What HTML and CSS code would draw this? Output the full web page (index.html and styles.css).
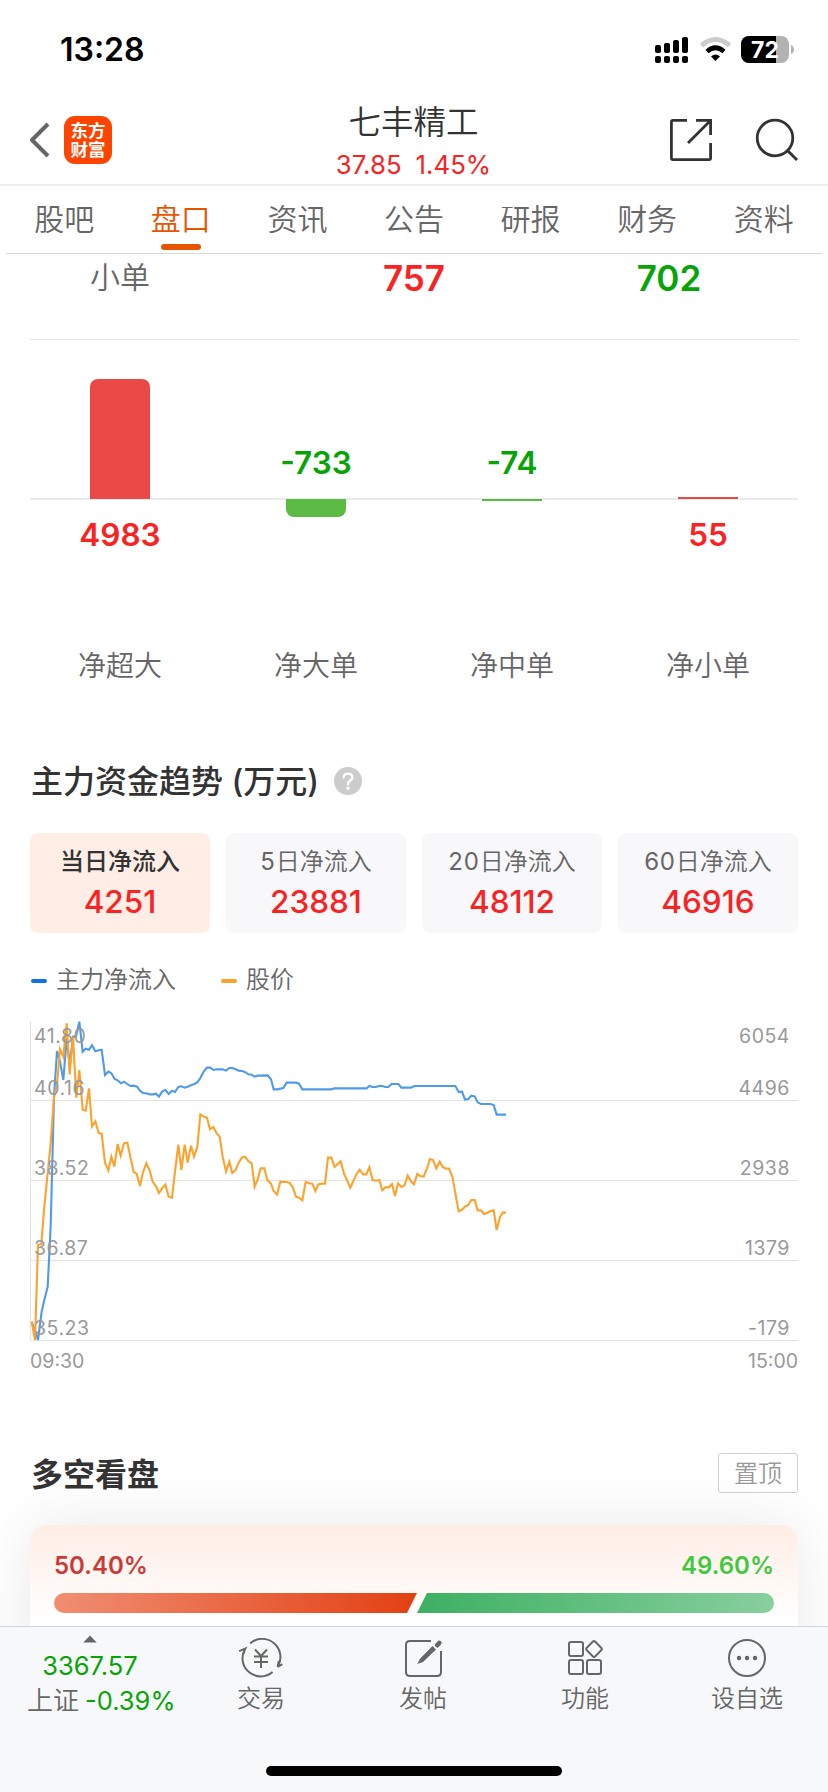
FILE: index.html
```html
<!DOCTYPE html>
<html lang="zh-CN">
<head>
<meta charset="utf-8">
<title>七丰精工</title>
<link rel="stylesheet" href="styles.css">
</head>
<body>
<div class="screen">
  <div class="status">
    <span class="clock">13:28</span>
    <svg class="status-icons" width="140" height="28" viewBox="655 36 140 28">
      <g fill="#000">
        <rect x="655" y="45" width="6" height="8" rx="2"/><rect x="664" y="43" width="6" height="10" rx="2"/><rect x="673" y="40" width="6" height="13" rx="2"/><rect x="682" y="37" width="6" height="16" rx="2"/>
        <rect x="655" y="56" width="6" height="7" rx="2"/><rect x="664" y="56" width="6" height="7" rx="2"/><rect x="673" y="56" width="6" height="7" rx="2"/><rect x="682" y="56" width="6" height="7" rx="2"/>
      </g>
      <path d="M701.500 45.500Q715.500 33.500 729.500 45.500" fill="none" stroke="#ccc" stroke-width="5"/>
      <path d="M707 51.500Q715.500 44 724 51.500" fill="none" stroke="#000" stroke-width="4.600"/>
      <path d="M711 56.500Q715.500 52.500 720 56.500L715.500 61Z"/>
      <clipPath id="bat"><rect x="741" y="36" width="48" height="27" rx="8"/></clipPath>
      <g clip-path="url(#bat)"><rect x="741" y="36" width="48" height="27" fill="#b2b2b2"/><rect x="741" y="36" width="35" height="27"/></g>
      <path d="M791 45Q794 46.500 794 49.500T791 54Z" fill="#b2b2b2"/>
      <text class="bat-text" x="765" y="58">72</text>
    </svg>
  </div>

  <header class="header">
    <div class="header-left">
      <svg width="22" height="38" viewBox="0 0 22 38"><path d="M19 3L3 19L19 35" fill="none" stroke="#666" stroke-width="4" stroke-linejoin="round"/></svg>
      <div class="logo"><span>东方</span><span>财富</span></div>
    </div>
    <div class="header-title">
      <div class="stock-name">七丰精工</div>
      <div class="stock-price"><span>37.85</span><span>1.45%</span></div>
    </div>
    <svg class="header-icons" width="130" height="46" viewBox="668 117 130 46" fill="none" stroke="#333" stroke-width="2.800">
      <path d="M687 120.400H673Q671.400 120.400 671.400 122V158Q671.400 159.600 673 159.600H709Q710.600 159.600 710.600 158V143M696 120.400H710.600V135M710 121L688 143"/>
      <circle cx="775" cy="138" r="17.800"/><path d="M788 151L797 160"/>
    </svg>
  </header>

  <nav class="tabs">
    <span>股吧</span><span class="active">盘口</span><span>资讯</span><span>公告</span><span>研报</span><span>财务</span><span>资料</span>
  </nav>

  <main class="content">
    <div class="order-row">
      <span>小单</span><b class="up">757</b><b class="down">702</b>
    </div>

    <div class="flow-chart">
      <div class="col"><div class="above"><i class="bar bar-up h120"></i></div><div class="below"><b class="up">4983</b></div><span>净超大</span></div>
      <div class="col"><div class="above"><b class="down">-733</b></div><div class="below"><i class="bar bar-down h18"></i></div><span>净大单</span></div>
      <div class="col"><div class="above"><b class="down">-74</b></div><div class="below"><i class="bar bar-down thin"></i></div><span>净中单</span></div>
      <div class="col"><div class="above"><i class="bar bar-up thin"></i></div><div class="below"><b class="up">55</b></div><span>净小单</span></div>
    </div>

    <h2 class="section-title"><span>主力资金趋势 (万元)</span>
      <svg width="28" height="28" viewBox="0 0 28 28"><circle cx="14" cy="14" r="14" fill="#ccc"/><path d="M9.700 10.300Q9.900 6.600 14 6.600T18.300 10.400Q18.300 12.400 16 13.800Q14 15 14 17.300" fill="none" stroke="#fff" stroke-width="2.400" stroke-linecap="round"/><circle cx="14" cy="21.300" r="1.700" fill="#fff"/></svg>
    </h2>

    <div class="cards">
      <div class="card selected"><span>当日净流入</span><strong>4251</strong></div>
      <div class="card"><span><em>5</em>日净流入</span><strong>23881</strong></div>
      <div class="card"><span><em>20</em>日净流入</span><strong>48112</strong></div>
      <div class="card"><span><em>60</em>日净流入</span><strong>46916</strong></div>
    </div>

    <div class="legend">
      <i class="dash blue"></i><span>主力净流入</span>
      <i class="dash orange"></i><span>股价</span>
    </div>

    <svg class="trend" width="768" height="322" viewBox="30 30 2304 966">
      <g class="grid"><path d="M31.500 33V993M30 271.500H2334M30 511.500H2334M30 751.500H2334M30 991.500H2334"/></g>
      <polyline class="line-blue" points="35,935 45,965 54,990 65,905 73,870 83,830 92,650 102,260 111,123 120,155 130,210 140,85 149,165 159,80 168,80 178,35 188,125 197,116 207,119 216,106 226,124 236,121 245,119 255,195 265,185 274,190 284,207 293,211 303,220 312,215 322,222 331,228 341,227 351,230 360,242 369,249 379,250 389,253 399,253 408,251 417,260 427,244 436,240 446,252 456,242 465,246 475,231 484,229 494,233 503,230 513,226 523,222 532,217 541,204 551,185 561,173 571,173 580,180 590,178 608,178 618,182 628,174 637,174 647,178 656,182 666,183 675,186 685,193 695,194 704,200 713,197 743,196 753,208 761,238 771,238 790,234 800,218 828,218 837,221 847,238 933,238 943,235 1040,235 1048,228 1058,231 1067,231 1077,228 1087,228 1096,231 1105,231 1115,222 1135,222 1144,233 1173,233 1183,228 1306,228 1316,246 1326,245 1335,269 1345,267 1354,257 1364,259 1373,277 1383,282 1411,282 1421,285 1430,314 1458,314"/>
      <polyline class="line-orange" points="35,935 45,990 54,705 64,702 73,590 83,490 92,400 102,262 111,225 120,118 130,140 140,40 149,193 159,80 169,263 178,180 188,299 197,302 207,235 216,349 226,334 236,369 245,371 255,458 265,481 274,440 283,470 293,402 302,437 312,400 322,398 331,440 341,486 350,491 360,528 369,487 379,460 389,482 398,515 408,529 417,549 427,534 436,524 446,560 456,563 465,485 475,404 484,480 494,404 503,458 513,407 522,440 532,410 541,313 551,320 561,323 570,358 580,351 590,370 599,380 608,440 618,485 628,455 637,489 647,480 656,458 666,442 675,440 685,453 695,460 704,530 713,508 722,475 733,475 742,510 753,521 761,543 771,554 781,515 800,516 809,519 818,531 828,560 837,563 847,571 857,516 867,520 877,521 886,543 895,523 904,521 915,521 924,443 934,443 944,471 962,454 972,491 982,513 991,533 1001,511 1010,491 1019,479 1029,493 1039,493 1048,472 1058,510 1068,512 1078,510 1087,541 1096,532 1106,532 1116,522 1125,558 1134,520 1144,531 1154,526 1163,497 1173,514 1182,523 1192,492 1201,498 1211,500 1221,475 1230,447 1239,450 1249,475 1259,455 1268,471 1278,476 1287,476 1297,500 1307,555 1316,604 1325,600 1335,590 1345,585 1354,570 1364,570 1373,601 1383,601 1392,612 1402,609 1412,603 1421,601 1430,660 1440,621 1449,607 1458,608"/>
      <g class="axis">
        <text x="42" y="99">41.80</text><text x="42" y="255">40.16</text><text x="42" y="495">38.52</text><text x="42" y="735">36.87</text><text x="42" y="975">35.23</text>
      </g>
      <g class="axis right">
        <text x="2310" y="99">6054</text><text x="2310" y="255">4496</text><text x="2310" y="495">2938</text><text x="2310" y="735">1379</text><text x="2310" y="975">-179</text>
      </g>
    </svg>
    <div class="times"><span>09:30</span><span>15:00</span></div>

    <div class="section-head">
      <h2>多空看盘</h2>
      <span class="pin">置顶</span>
    </div>

    <div class="ratio-card">
      <div class="ratio-labels"><span class="bull">50.40%</span><span class="bear">49.60%</span></div>
      <div class="ratio-bar"><i class="bull-bar"></i><i class="bear-bar"></i></div>
    </div>
  </main>

  <footer class="bottom">
    <div class="bottom-items">
      <div class="index">
        <svg width="14" height="8" viewBox="0 0 14 8"><path d="M7 0.500L13.700 7.500H0.300Z" fill="#666"/></svg>
        <div class="index-value">3367.57</div>
        <div class="index-change"><span>上证</span><span class="green">-0.39%</span></div>
      </div>
      <div class="item">
        <svg width="48" height="40" viewBox="237 1638 48 40">
          <path d="M250.200 1643.400A18.200 18.200 0 0 1 277.600 1666.800L282.300 1664.200M277.600 1666.800L278.800 1661"/>
          <path d="M272.600 1672A18.200 18.200 0 0 1 245.200 1648.700L239.200 1651.200M245.200 1648.700L243.500 1654"/>
          <path d="M255 1649.500L261 1656L267 1649.500M261 1656V1668M254 1656.500H268M254 1662H268"/>
        </svg>
        <span>交易</span>
      </div>
      <div class="item">
        <svg width="44" height="40" viewBox="401 1638 44 40">
          <path d="M431 1641H410Q406 1641 406 1645V1672Q406 1676 410 1676H437Q441 1676 441 1672V1651"/>
          <path d="M417.200 1664L420.200 1658.500L432.500 1646L436 1649.500L423 1662Z" fill="#666" stroke="none"/><path d="M437.200 1645.200L439.300 1643" stroke-width="4.600" stroke-linecap="round"/>
        </svg>
        <span>发帖</span>
      </div>
      <div class="item">
        <svg width="44" height="40" viewBox="563 1638 44 40">
          <rect x="569" y="1642" width="14" height="14" rx="2"/><rect x="569" y="1660" width="14" height="14" rx="2"/><rect x="587" y="1660" width="14" height="14" rx="2"/>
          <rect x="588" y="1643" width="12" height="12" rx="1.500" transform="rotate(45 594 1649)"/>
        </svg>
        <span>功能</span>
      </div>
      <div class="item">
        <svg width="44" height="40" viewBox="725 1638 44 40">
          <circle cx="747" cy="1658" r="18"/><g class="dots"><circle cx="739" cy="1658" r="2.200"/><circle cx="747" cy="1658" r="2.200"/><circle cx="755" cy="1658" r="2.200"/></g>
        </svg>
        <span>设自选</span>
      </div>
    </div>
    <div class="home-bar"></div>
  </footer>
</div>
</body>
</html>
```
FILE: styles.css
```css
* { box-sizing: border-box; }
body { margin: 0; background: #fff; }
i, em { font-style: normal; }
h2 { margin: 0; }
svg { display: block; flex: none; }

.screen {
  width: 828px;
  height: 1792px;
  display: flex;
  flex-direction: column;
  overflow: hidden;
  font-family: Inter, "Noto Sans CJK SC", sans-serif;
  color: #666;
  white-space: nowrap;
}

.status {
  height: 99px;
  padding: 0 33px 0 60px;
  display: flex;
  justify-content: space-between;
  align-items: center;
}
.clock { font-size: 32px; font-weight: 600; color: #000; }
.bat-text { font-size: 23px; font-weight: 700; fill: #fff; text-anchor: middle; }

.header {
  height: 87px;
  border-bottom: 2px solid #eee;
  padding: 0 30px 0 29px;
  display: grid;
  grid-template-columns: 130px 1fr 130px;
  align-items: start;
}
.header-left { display: flex; align-items: center; gap: 13px; padding-top: 17px; }
.logo {
  width: 48px;
  height: 48px;
  border-radius: 11px;
  background: #ff4400;
  color: #fff;
  font-size: 17.500px;
  font-weight: 700;
  line-height: 19.500px;
  display: flex;
  flex-direction: column;
  align-items: center;
  justify-content: center;
}
.header-title { display: flex; flex-direction: column; align-items: center; padding-top: 1px; }
.stock-name { font-size: 32.500px; font-weight: 350; line-height: 46px; color: #333; }
.stock-price { display: flex; gap: 14px; font-size: 25.800px; line-height: 38px; color: #f82323; }
.header-icons { margin-top: 18px; }

.tabs {
  height: 68px;
  margin: 0 6px;
  border-bottom: 1px solid #d8d8d8;
  display: grid;
  grid-template-columns: repeat(7, 1fr);
  font-size: 30px;
  font-weight: 350;
  line-height: 66px;
  text-align: center;
}
.active { color: #e85500; display: flex; flex-direction: column; align-items: center; }
.active::after {
  content: "";
  width: 40px;
  height: 6px;
  margin-top: -8px;
  border-radius: 3px;
  background: #e85500;
}

.content { height: 1372px; overflow: hidden; }
.up { color: #f82323; }
.down { color: #07a407; }

.order-row {
  height: 86px;
  margin: 0 30px;
  border-bottom: 1px solid #e5e5e5;
  display: grid;
  grid-template-columns: 180px 408px 102px;
  text-align: center;
  line-height: 48px;
}
.order-row span { font-size: 30px; font-weight: 350; line-height: 46px; }
.order-row b { font-size: 35px; font-weight: 600; }

.flow-chart {
  margin: 0 30px;
  display: flex;
  justify-content: space-between;
  background: linear-gradient(#eaeaea, #eaeaea) 0 158px / 100% 2px no-repeat;
}
.col { width: 180px; display: flex; flex-direction: column; align-items: center; }
.above { height: 159px; display: flex; flex-direction: column; justify-content: flex-end; }
.below { height: 147px; }
.col b { display: block; font-size: 31.500px; font-weight: 600; line-height: 40px; }
.above b { padding-bottom: 16px; }
.below b { padding-top: 16px; }
.col span { font-size: 28px; font-weight: 350; line-height: 40px; }
.bar { display: block; width: 60px; }
.bar-up { background: #eb4848; border-radius: 8px 8px 0 0; }
.bar-down { background: #5bba44; border-radius: 0 0 8px 8px; }
.h120 { height: 120px; }
.h18 { height: 18px; }
.thin { height: 2px; border-radius: 0; }

.section-title {
  margin: 71px 30px 28px 31px;
  display: flex;
  align-items: center;
  gap: 15px;
  font-size: 32px;
  font-weight: 500;
  line-height: 48px;
  color: #333;
}
.section-title span { padding-top: 1px; line-height: 47px; }

.cards { margin: 0 30px; display: grid; grid-template-columns: repeat(4, 1fr); gap: 16px; }
.card {
  height: 100px;
  padding-top: 10px;
  border-radius: 8px;
  background: #f8f8fb;
  display: flex;
  flex-direction: column;
  align-items: center;
}
.card span { font-size: 24px; font-weight: 350; line-height: 37px; }
.card em { font-weight: 400; letter-spacing: 0.800px; }
.card strong { font-size: 31.500px; font-weight: 500; line-height: 44px; color: #f82323; }
.card.selected { background: #ffede6; }
.card.selected span { color: #333; font-weight: 500; line-height: 38px; }
.card.selected strong { margin-top: -1px; }

.legend {
  height: 40px;
  margin: 28px 31px 0;
  display: flex;
  align-items: center;
  font-size: 24px;
  font-weight: 350;
}
.legend span { line-height: 34px; padding-bottom: 3px; }
.dash { width: 16px; height: 4px; margin-right: 9px; border-radius: 2px; }
.blue { background: #1073dc; }
.orange { background: #faa22d; margin-left: 45px; }

.trend { margin: 19px 30px 0; }
.grid { fill: none; stroke: #e3e3e3; stroke-width: 3; }
.line-blue, .line-orange { fill: none; stroke-width: 6.300; stroke-linejoin: miter; }
.line-blue { stroke: #509ae8; }
.line-orange { stroke: #fba32e; }
.axis { font-size: 58.500px; fill: #999; letter-spacing: 1.600px; }
.right { text-anchor: end; }
.times {
  height: 37px;
  margin: 0 30px;
  display: flex;
  justify-content: space-between;
  font-size: 19.500px;
  line-height: 38px;
  color: #999;
}

.section-head {
  margin: 74px 30px 0 31px;
  height: 40px;
  display: flex;
  align-items: center;
  justify-content: space-between;
}
.section-head h2 { font-size: 32px; font-weight: 700; line-height: 38px; padding-top: 3px; color: #333; }
.pin {
  width: 80px;
  height: 40px;
  border: 1px solid #ced0d8;
  border-radius: 3px;
  font-size: 24px;
  font-weight: 350;
  line-height: 40px;
  text-align: center;
  color: #999;
}

.ratio-card {
  height: 240px;
  margin: 32px 30px 0;
  padding: 24px;
  border-radius: 16px;
  background: linear-gradient(#ffede5, #fff 96px);
  box-shadow: 0 0 60px rgba(0, 0, 0, 0.09);
}
.ratio-labels {
  display: flex;
  justify-content: space-between;
  font-size: 24px;
  font-weight: 600;
  line-height: 34px;
}
.bull { color: #c93a3a; }
.bear { color: #40c840; }
.ratio-bar { height: 20px; margin-top: 10px; display: flex; }
.bull-bar {
  width: 363px;
  border-radius: 10px 0 0 10px;
  background: linear-gradient(90deg, #f08e72, #e34013);
  clip-path: polygon(0 0, 100% 0, calc(100% - 10px) 100%, 0 100%);
}
.bear-bar {
  flex: 1;
  border-radius: 0 10px 10px 0;
  background: linear-gradient(90deg, #3db062, #88cf9e);
  clip-path: polygon(10px 0, 100% 0, 100% 100%, 0 100%);
}

.bottom {
  position: relative;
  height: 166px;
  border-top: 1px solid #d3d5dd;
  background: #f7f8fa;
  display: flex;
  flex-direction: column;
  justify-content: space-between;
  align-items: center;
}
.bottom-items { width: 100%; display: grid; grid-template-columns: 180px repeat(4, 162px); }
.index { padding: 8px 0 0; display: flex; flex-direction: column; align-items: center; }
.index-value { font-size: 25.500px; line-height: 34px; margin-top: 6px; color: #07a407; }
.index-change { display: flex; gap: 6px; padding-left: 27px; font-size: 26px; font-weight: 350; line-height: 35px; align-self: flex-start; }
.green { font-size: 25.500px; font-weight: 400; color: #07a407; }
.item { padding-top: 11px; display: flex; flex-direction: column; align-items: center; font-size: 24px; font-weight: 350; line-height: 42px; }
.item svg { fill: none; stroke: #666; stroke-width: 2; }
.item .dots { fill: #666; stroke: none; }
.home-bar { width: 296px; height: 10px; margin-bottom: 16px; border-radius: 5px; background: #000; }
```
